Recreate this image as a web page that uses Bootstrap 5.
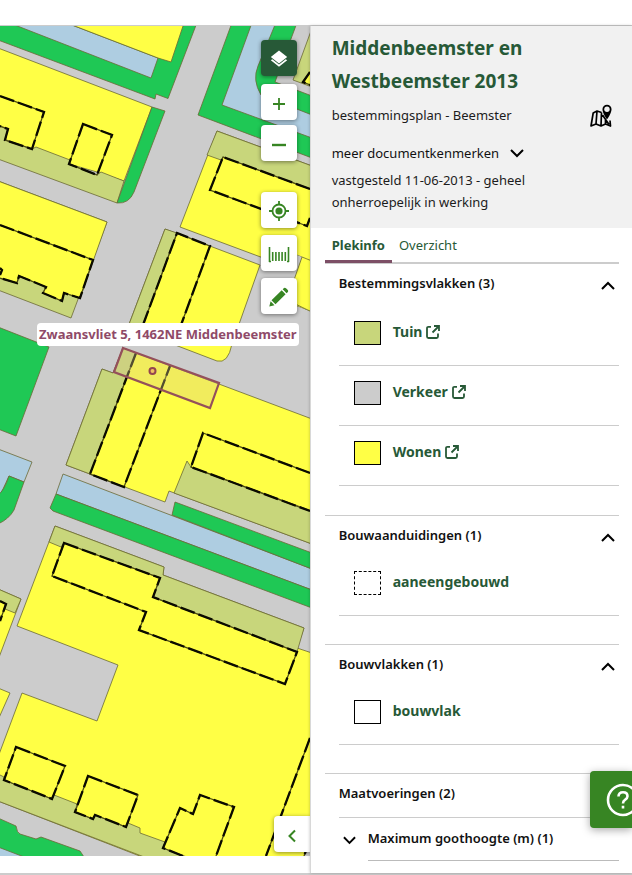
<!DOCTYPE html>
<html lang="nl">
<head>
<meta charset="utf-8">
<meta name="viewport" content="width=device-width, initial-scale=1">
<title>Middenbeemster en Westbeemster 2013</title>
<link href="https://cdn.jsdelivr.net/npm/bootstrap@5.3.0/dist/css/bootstrap.min.css" rel="stylesheet">
<style>
  body { font-family: "Noto Sans", "Open Sans", sans-serif; font-size: 13px; line-height: 22px; color: #1c1c1c; overflow: hidden; }
  .viewer { margin-top: 25px; border-top: 1px solid #ccc; border-bottom: 2px solid #ccc; height: calc(100vh - 25px); }
  .map-pane { min-width: 0; padding-bottom: 17px; }
  .map-pane > .plan { display: block; width: 100%; height: 100%; background: #ccc; }
  .side { flex: 0 0 51%; border-left: 1px solid #d8d8d8; box-shadow: 0 0 3px rgba(0,0,0,.25); background: #fff; z-index: 2; min-width: 0; }
  .doc-head { background: #f1f1f1; padding: 6px 20px 15px 21px; }
  .doc-head h1 { font-size: 19px; line-height: 33px; font-weight: 700; color: #275937; margin-bottom: 6px; }
  .more { line-height: 22px; color: #111; padding: 0; border: 0; background: none; margin-top: 14px; margin-bottom: 5px; }
  .status-text { max-width: 220px; }
  .pane { padding: 0 13px 0 14px; }
  .tabs { border-bottom: 2px solid #ccc; height: 36px; }
  .tab-link { height: 35px; line-height: 34px; padding: 0 7px; color: #275937; background: none; border: 0; border-bottom: 3px solid transparent; }
  .tab-link.active { font-weight: 700; border-bottom-color: #7d4f66; }
  .group { border-top: 1px solid #ccc; padding: 0 0 28px 14px; }
  .group.first { border-top: 0; padding-bottom: 29px; }
  .group.first .group-head { margin-bottom: 2px; }
  .group.last { padding-bottom: 0; }
  .group-head { width: 100%; height: 40px; padding: 0 4px 2px 0; border: 0; background: none; font-weight: 600; color: #111; text-align: left; }
  .group-head svg { margin-top: 5px; }
  .group.last > .group-head { height: 43px; padding-bottom: 5px; }
  .entry { height: 60px; border-bottom: 1px solid #ccc; padding: 0 0 8px 15px; }
  .entry a, .entry .label-text { color: #275937; font-weight: 700; font-size: 14px; text-decoration: none; }
  .swatch { width: 27px; height: 24px; border: 1px solid #000; margin-top: 2px; }
  .s-tuin { background: #c8d67b; } .s-verkeer { background: #ccc; } .s-wonen { background: #ffff45; } .s-dash { border-style: dashed; }
  .sub { border-top: 1px solid #ccc; }
  .sub .group-head { height: 42px; padding-left: 4px; gap: 12px; }
  .sub hr { margin: 0 0 0 29px; border-color: #bbb; opacity: 1; }
  .tool { width: 36px; height: 36px; padding: 0; border: 0; border-radius: 4px; background: #fff; color: #378523; box-shadow: 0 1px 4px rgba(0,0,0,.45); }
  .tool.dark { background: #275937; color: #fff; }
  .tools { top: 14px; right: 13px; }
  .gap-a { margin-bottom: 8px; } .gap-b { margin-bottom: 5px; } .gap-c { margin-bottom: 31px; } .gap-d { margin-bottom: 7px; }
  .collapse-tool { right: 0; bottom: 21px; border-radius: 4px 0 0 4px; }
  .place { left: 37px; top: 297px; padding: 0 2px; height: 23px; line-height: 23px; border-radius: 4px; background: #fff; color: #8f4a68; font-weight: 700; white-space: nowrap; }
  .help { right: 0; bottom: 45px; width: 42px; height: 57px; padding: 0 0 0 16px; border: 0; border-radius: 4px 0 0 4px; background: #378523; box-shadow: 0 2px 8px rgba(0,0,0,.35); overflow: hidden; z-index: 5; }
  .help svg { display: block; }
</style>
<script src="https://cdn.jsdelivr.net/npm/bootstrap@5.3.0/dist/js/bootstrap.bundle.min.js"></script>
</head>
<body>
<main class="viewer d-flex position-relative">
  <section class="map-pane flex-grow-1 position-relative" aria-label="Kaart">
    <svg class="plan" viewBox="0 26 310 830" preserveAspectRatio="xMinYMin slice" role="img" aria-label="Plankaart">
      <defs>
        <style>
          .pl { stroke: #6b6a35; stroke-width: .8; stroke-linejoin: round; }
          .y { fill: #ffff45; } .t { fill: #c8d67b; } .g { fill: #1fc855; } .b { fill: #aecde1; } .v { fill: #ccc; }
          .thin { fill: none; stroke: #4d4c10; stroke-width: 1.3; }
          .bold { fill: none; stroke: #0b0b00; stroke-width: 2.3; stroke-dasharray: 15 4; }
        </style>
        <g id="outlines">
          <path d="M0 96L44 112L32 149L5 140L8 129L0 126M83 124L112 135L97 175L69 164Z"/>
          <path d="M0 225L93 260L80 298L64 293L62 301L43 293L46 287L19 276L17 283L0 278M0 268L2 270L0 275"/>
          <path d="M310 189L223 157L210 190L307 226L310 218M310 72L303 82L310 85"/>
          <path d="M143 325L177 233L210 246L181 325"/>
          <path d="M136 353L90 474L124 487L170 366"/>
          <path d="M310 473L203 433L191 467L310 511"/>
          <path d="M64 543L160 578L153 597L297 652L285 684L139 630L146 612L52 576Z"/>
          <path d="M0 601L6 604L0 621"/>
          <path d="M16 747L65 766L52 799L4 780ZM88 776L138 795L126 827L95 815L93 819L75 812Z"/>
          <path d="M183 856L163 848L180 808L193 814L200 795L234 807L216 856M310 738L266 856M310 840L304 856"/>
        </g>
      </defs>
      <rect class="v" y="20" width="310" height="840"/>
      <g class="pl">
        <path class="g" d="M-2 20H198L168 98.500L156 94L155 99L-2 40Z"/>
        <path class="b" d="M2 20H59L158 58L151 78Z"/>
        <path class="y" d="M59 20H185L171 62L158 58Z"/>
        <path class="y" d="M-2 48L152 107L124 181L97 172L69 164L32 149L-2 137Z"/>
        <path class="t" d="M-2 126L8 129L5 140L32 149L36 147L70 160L69 164L97 175L101 172L124 181L117 203L-2 159Z"/>
        <path class="g" d="M152 107L165 111L134 192Q129 204 117 203Z"/>
        <path class="t" d="M-2 181L107 222L71 318L-2 290Z"/>
        <path class="y" d="M-2 181L107 222L80 298L64 293L62 301L43 293L46 287L19 276L17 283L-2 278Z"/>
        <path class="g" d="M233 20L198 115L312 158V20Z"/>
        <path class="b" d="M253 20L222 105L312 138V115L261 95Q252 80 258 66L277 20Z"/>
        <path class="v" d="M298 20L275 82L312 96V20Z"/>
        <path class="t" d="M315 20L293 80L312 87Z"/>
        <path class="y" stroke="none" d="M312 66L303 82L312 85Z"/>
        <path class="y" d="M217 131L312 166V312L291 304V288L302 257L272 246L266 259L180 227Z"/>
        <path class="t" d="M217 131L312 166V190L223 157L221 160L207 155Z"/>
        <path class="v" d="M302 257L291 289V304L312 312L312 340H265L276 275L262 257L272 246Z" stroke="none"/>
        <path class="y" d="M312 261L302 257L287 300L312 312Z"/>
        <path class="y" d="M165 229L260 265L232 344Q228 364 217 361L128 327Z"/>
        <path class="t" d="M165 229L177 233L143 325V332L128 327Z"/>
        <path class="y" d="M123 348L312 419V544L169 491L165 502L66 465L102 369L113 373Z"/>
        <path class="t" d="M123 348L136 353L90 474L66 465L102 369L113 373Z"/>
        <path class="t" d="M187 461L191 467L312 511V544L174 493Z"/>
        <path class="g" d="M-2 327L49 347L16 436L-2 429Z"/>
        <path class="b" d="M-2 449L32 462L24 482L9 476L-2 500Z"/>
        <path class="g" d="M9 476L24 482L14 510Q9 519 -2 524V495Q4 491 9 476Z"/>
        <path class="b" d="M63 474L312 569V590L56 494Z"/>
        <path class="g" d="M56 494L312 590V608L53 511L50 508Z"/>
        <path class="g" d="M175 502L312 553V569L172 515Z"/>
        <path class="y" d="M55 526L164 567L163 575L304 628L297 648L312 653V860H150L-2 801V757L22 693L97 721L118 665L17 626Z"/>
        <path class="t" d="M55 526L164 567L163 575L304 628L297 652L153 597L160 578L64 543L61 547L49 542Z"/>
        <path class="y" d="M-2 589L21 599L-2 660Z"/>
        <path class="t" d="M-2 589L21 599L15 613L5 609L6 604L-2 601Z"/>
        <path class="y" d="M-2 688L10 693L-2 720Z"/>
        <path class="t" d="M-2 774L4 777V780L52 799L54 795L77 804L75 812L93 819L95 815L126 827L128 823L140 828V833L165 842L163 848L195 860H152L-2 801Z"/>
        <path class="g" d="M-2 818L16 826Q17 833 20 834L36 839L41 837L80 851L86 860H-2Z"/>
        <path class="b" d="M-2 847L32 860H-2Z"/>
      </g>
      <path class="v" d="M310 842L304 856H310Z"/>
      <use href="#outlines" class="thin"/>
      <use href="#outlines" class="bold"/>
      <path d="M123 348L219 383L210 408L114 372Z" fill="#d8c98a" fill-opacity=".35" stroke="#94505b" stroke-width="2.200"/>
      <circle cx="152.500" cy="371" r="3" fill="#f0c060" stroke="#94454f" stroke-width="2"/>
    </svg>
    <div class="place position-absolute">Zwaansvliet 5, 1462NE Middenbeemster</div>
    <div class="tools position-absolute d-flex flex-column">
      <button class="tool dark gap-a" aria-label="Kaartlagen"><svg width="20" height="20" viewBox="0 0 20 20" fill="currentColor"><path d="M10 1.500L18.200 8 10 14.400 1.800 8Z"/><path d="M1.800 11.300L3.300 10.200 10 15.400 16.700 10.200 18.200 11.300 10 17.800Z"/></svg></button>
      <button class="tool gap-b" aria-label="Inzoomen"><svg width="14" height="14" viewBox="0 0 14 14" stroke="currentColor" stroke-width="1.800"><path d="M7 1V13M1 7H13"/></svg></button>
      <button class="tool gap-c" aria-label="Uitzoomen"><svg width="14" height="14" viewBox="0 0 14 14" stroke="currentColor" stroke-width="2.400"><path d="M0 7H14"/></svg></button>
      <button class="tool gap-d" aria-label="Mijn locatie"><svg width="22" height="22" viewBox="0 0 22 22" fill="none" stroke="currentColor" stroke-width="1.800"><circle cx="11" cy="11" r="6.500"/><circle cx="11" cy="11" r="3.600" fill="currentColor" stroke="none"/><path d="M11 1V4.500M11 17.500V21M1 11H4.500M17.500 11H21"/></svg></button>
      <button class="tool gap-d" aria-label="Meten"><svg width="22" height="18" viewBox="0 0 22 18" fill="none" stroke="currentColor" stroke-width="1.600"><path d="M1.500 1V16M4.700 6V15M7.900 6V15M11 6V15M14.100 6V15M17.300 6V15M20.500 1V16M1 15.500H3M19 15.500H21"/></svg></button>
      <button class="tool" aria-label="Tekenen"><svg width="22" height="22" viewBox="0 0 22 22" fill="currentColor"><path d="M1.300 20.500L2.600 15.300 6.500 19.200ZM3.500 14.300L13.700 4.300 17.600 8.200 7.500 18.300ZM14.700 3.300L16 2Q17 1.300 18 2.200L19.800 4Q20.600 5 19.900 6L18.600 7.200Z"/></svg></button>
    </div>
    <button class="tool collapse-tool position-absolute" aria-label="Paneel inklappen"><svg width="10" height="14" viewBox="0 0 10 14" fill="none" stroke="currentColor" stroke-width="2"><path d="M8 1.500L2.500 7 8 12.500"/></svg></button>
  </section>

  <aside class="side overflow-hidden">
    <header class="doc-head">
      <h1>Middenbeemster en<br>Westbeemster 2013</h1>
      <div class="d-flex justify-content-between">
        <span>bestemmingsplan - Beemster</span>
        <svg width="22" height="24" viewBox="0 0 22 24" fill="none" stroke="#000" stroke-width="1.700" stroke-linejoin="round"><path d="M11.500 8.500L7 7 3.200 9 1 22 6 20 11 22 15.500 20 20.500 22 20 16.500M7 7L6 20M11.500 8.500L11 22M15.500 16V20M12.500 11L19 20.500"/><path d="M17 14Q13.300 8.500 13.300 5.300A3.700 3.700 0 0 1 20.700 5.300Q20.700 8.500 17 14Z" fill="#000"/><circle cx="17" cy="5.300" r="2.700" fill="#f1f1f1" stroke="none"/></svg>
      </div>
      <button class="more d-flex align-items-center">meer documentkenmerken<svg class="ms-2" width="20" height="14" viewBox="0 0 20 14" fill="none" stroke="#000" stroke-width="2"><path d="M4 4L10 10 16 4"/></svg></button>
      <div class="status-text">vastgesteld 11-06-2013 - geheel onherroepelijk in werking</div>
    </header>
    <div class="pane">
      <div class="tabs d-flex" role="tablist">
        <button class="tab-link active" role="tab" aria-selected="true">Plekinfo</button>
        <button class="tab-link" role="tab" aria-selected="false">Overzicht</button>
      </div>
      <section class="group first">
        <button class="group-head d-flex align-items-center justify-content-between">Bestemmingsvlakken (3)<svg width="14" height="9" viewBox="0 0 14 9" fill="none" stroke="#000" stroke-width="2"><path d="M1 8L7 2 13 8"/></svg></button>
        <div class="entry d-flex align-items-center"><span class="swatch s-tuin"></span><a class="ms-2 ps-1 d-flex align-items-center" href="#tuin">Tuin<svg class="ms-1" width="14" height="14" viewBox="0 0 14 14" fill="none" stroke="currentColor" stroke-width="1.800"><path d="M5 1.800H2.500Q1 1.800 1 3.300V11.500Q1 13 2.500 13H10.500Q12 13 12 11.500V8.500M8 1H13V6M13 1L6.500 7.500"/></svg></a></div>
        <div class="entry d-flex align-items-center"><span class="swatch s-verkeer"></span><a class="ms-2 ps-1 d-flex align-items-center" href="#verkeer">Verkeer<svg class="ms-1" width="14" height="14" viewBox="0 0 14 14" fill="none" stroke="currentColor" stroke-width="1.800"><path d="M5 1.800H2.500Q1 1.800 1 3.300V11.500Q1 13 2.500 13H10.500Q12 13 12 11.500V8.500M8 1H13V6M13 1L6.500 7.500"/></svg></a></div>
        <div class="entry d-flex align-items-center"><span class="swatch s-wonen"></span><a class="ms-2 ps-1 d-flex align-items-center" href="#wonen">Wonen<svg class="ms-1" width="14" height="14" viewBox="0 0 14 14" fill="none" stroke="currentColor" stroke-width="1.800"><path d="M5 1.800H2.500Q1 1.800 1 3.300V11.500Q1 13 2.500 13H10.500Q12 13 12 11.500V8.500M8 1H13V6M13 1L6.500 7.500"/></svg></a></div>
      </section>
      <section class="group">
        <button class="group-head d-flex align-items-center justify-content-between">Bouwaanduidingen (1)<svg width="14" height="9" viewBox="0 0 14 9" fill="none" stroke="#000" stroke-width="2"><path d="M1 8L7 2 13 8"/></svg></button>
        <div class="entry d-flex align-items-center"><span class="swatch s-dash"></span><span class="label-text ms-2 ps-1">aaneengebouwd</span></div>
      </section>
      <section class="group">
        <button class="group-head d-flex align-items-center justify-content-between">Bouwvlakken (1)<svg width="14" height="9" viewBox="0 0 14 9" fill="none" stroke="#000" stroke-width="2"><path d="M1 8L7 2 13 8"/></svg></button>
        <div class="entry d-flex align-items-center"><span class="swatch"></span><span class="label-text ms-2 ps-1">bouwvlak</span></div>
      </section>
      <section class="group last">
        <button class="group-head d-flex align-items-center">Maatvoeringen (2)</button>
        <div class="sub">
          <button class="group-head d-flex align-items-center"><svg width="13" height="9" viewBox="0 0 14 9" fill="none" stroke="#000" stroke-width="2"><path d="M1 1L7 7 13 1"/></svg>Maximum goothoogte (m) (1)</button>
          <hr>
        </div>
      </section>
    </div>
  </aside>
  <button class="help position-absolute" aria-label="Help"><svg width="34" height="34" viewBox="0 0 34 34" fill="none" stroke="#fff" stroke-width="2.600"><circle cx="17" cy="17" r="15"/><path d="M12.500 13.500Q12.500 9.300 17 9.300T21.500 13.300Q21.500 15.300 19 16.800Q17 18 17 20.500"/><path d="M17 22.800V25.600"/></svg></button>
</main>
</body>
</html>
